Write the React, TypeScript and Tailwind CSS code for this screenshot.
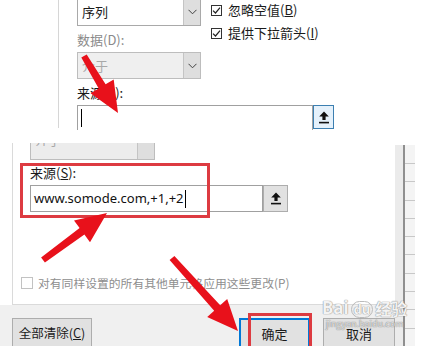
import React from "react";

type Pt = [number, number];

// outline of a thick marker-style arrow, tail -> tip
const arrowPoints = (tail: Pt, tip: Pt, shaft = 8, head = 27, headLen = 31) => {
  const dx = tip[0] - tail[0];
  const dy = tip[1] - tail[1];
  const len = Math.hypot(dx, dy);
  const ux = dx / len;
  const uy = dy / len;
  const px = -uy;
  const py = ux;
  const bx = tip[0] - ux * headLen;
  const by = tip[1] - uy * headLen;
  const t = shaft * 0.4;
  const pts: Pt[] = [
    [tail[0] + px * t, tail[1] + py * t],
    [bx + (px * shaft) / 2, by + (py * shaft) / 2],
    [bx + (px * head) / 2, by + (py * head) / 2],
    tip,
    [bx - (px * head) / 2, by - (py * head) / 2],
    [bx - (px * shaft) / 2, by - (py * shaft) / 2],
    [tail[0] - px * t, tail[1] - py * t],
  ];
  return pts.map((p) => p.map((n) => n.toFixed(1)).join(",")).join(" ");
};

const Chevron = () => (
  <svg width="9" height="6" viewBox="0 0 9 6">
    <path d="M0.5 0.8 L4.5 4.8 L8.5 0.8" fill="none" stroke="#404040" strokeWidth="1" />
  </svg>
);

const UploadIcon = () => (
  <svg width="10" height="13" viewBox="0 0 10 13">
    <path d="M5 0.5 L9.8 5.5 H6.6 V9 H3.4 V5.5 H0.2 Z" fill="#111" />
    <rect x="0" y="10.8" width="10" height="1.6" fill="#111" />
  </svg>
);

const CheckBox = ({ label, checked }: { label: React.ReactNode; checked?: boolean }) => (
  <div className="flex h-[14px] items-center">
    <div className="flex h-[11px] w-[11px] items-center justify-center border border-[#333] bg-white">
      {checked && (
        <svg width="9" height="9" viewBox="0 0 9 9">
          <path d="M1 4.6 L3.5 7 L8 1.6" fill="none" stroke="#222" strokeWidth="1.2" />
        </svg>
      )}
    </div>
    <span className="ml-[6px] whitespace-nowrap leading-[14px]">{label}</span>
  </div>
);

const Combo = ({
  value,
  disabled,
  className,
}: {
  value: string;
  disabled?: boolean;
  className: string;
}) => (
  <div
    className={`flex w-[124px] border ${
      disabled ? "border-[#bdbdbd] bg-[#efefef]" : "border-[#a9a9a9] bg-white"
    } ${className}`}
  >
    <div
      className={`flex flex-1 items-center pl-[4px] ${
        disabled ? "text-[#a8a8a8]" : "text-[#1a1a1a]"
      }`}
    >
      {value}
    </div>
    <div className="flex w-[17px] items-center justify-center border-l border-[#c4c4c4] bg-[#dedede]">
      <Chevron />
    </div>
  </div>
);

export default function App() {
  return (
    <div className="relative h-[346px] w-[440px] overflow-hidden bg-white font-['Noto_Sans_CJK_SC','Noto_Sans',sans-serif] text-[13px] text-[#1a1a1a]">
      {/* upper crop of the dialog */}
      <section className="flex h-[130px] overflow-hidden">
        <div className="w-[58px] shrink-0" />
        <div className="h-[128px] w-px shrink-0 bg-[#d6d6d6]" />
        <div className="flex flex-col pl-[18px]">
          <div className="flex">
            <div className="flex w-[124px] flex-col">
              <Combo value="序列" className="-mt-[2px] h-[28px]" />
              <div className="mt-[5px] h-[18px] leading-[18px] text-[#8a8a8a]">数据(D):</div>
              <Combo value="介于" disabled className="mt-[3px] h-[27px]" />
              <div className="mt-[5px] h-[18px] leading-[18px]">
                来源(<u>S</u>):
              </div>
            </div>
            <div className="ml-[10px] flex flex-col gap-[9px] pt-[3px]">
              <CheckBox
                checked
                label={
                  <>
                    忽略空值(<u>B</u>)
                  </>
                }
              />
              <CheckBox
                checked
                label={
                  <>
                    提供下拉箭头(<u>I</u>)
                  </>
                }
              />
            </div>
          </div>
          <div className="mt-[3px] flex">
            <div className="flex h-[26px] w-[236px] items-start border border-[#a0a0a0] bg-white pl-[3px] pt-[3px]">
              <div className="h-[18px] w-px bg-black" />
            </div>
            <div className="flex h-[24px] w-[21px] items-center justify-center border border-[#3c7fb1] bg-[#e5f1fb]">
              <UploadIcon />
            </div>
          </div>
        </div>
      </section>

      <div className="h-[13px]" />

      {/* lower crop of the dialog */}
      <section className="flex h-[203px]">
        <div className="flex w-[395px] shrink-0 flex-col">
          <div className="ml-[12px] flex h-[162px] w-[383px] flex-col border-b border-l border-[#dadada]">
            <div className="ml-[17px] flex h-[17px] w-[125px] border-x border-b border-[#bdbdbd] bg-[#ececec]">
              <div className="flex-1 overflow-hidden pl-[4px]">
                <div className="-mt-[12px] leading-[18px] text-[#a8a8a8]">介于</div>
              </div>
              <div className="w-[17px] border-l border-[#c4c4c4] bg-[#dedede]" />
            </div>
            <div className="ml-[17px] mt-[4px] h-[18px] leading-[18px]">
              来源(<u>S</u>):
            </div>
            <div className="ml-[17px] mt-[3px] flex">
              <div className="flex h-[27px] w-[233px] items-center border border-[#a0a0a0] bg-white pl-[3px] font-['Noto_Sans',sans-serif] text-[13px] text-[#111]">
                www.somode.com,+1,+2
                <span className="ml-px h-[18px] w-px bg-black" />
              </div>
              <div className="flex h-[27px] w-[25px] items-center justify-center border border-[#adadad] bg-[#e1e1e1]">
                <UploadIcon />
              </div>
            </div>
            <div className="ml-[8px] mt-[64px] flex h-[14px] items-center text-[11.8px] text-[#8e8e8e]">
              <div className="h-[12px] w-[12px] border border-[#c2c2c2] bg-white" />
              <span className="ml-[5px] whitespace-nowrap">对有同样设置的所有其他单元格应用这些更改(P)</span>
            </div>
          </div>
          <div className="flex h-[41px] bg-[#f0f0f0] pt-[13px] text-[12.5px]">
            <div className="ml-[12px] flex h-[30px] w-[80px] items-start justify-center border border-[#adadad] bg-[#e1e1e1] pt-[5px]">
              全部清除(<u>C</u>)
            </div>
            <div className="ml-[147px] flex h-[30px] w-[71px] items-start justify-center border-2 border-[#0078d7] bg-[#e1e1e1] pt-[4px] text-[13px]">
              确定
            </div>
            <div className="ml-[13px] flex h-[30px] w-[72px] items-start justify-center border border-[#adadad] bg-[#e1e1e1] pt-[5px] text-[13px]">
              取消
            </div>
          </div>
        </div>
        {/* edge of the worksheet behind the dialog */}
        <div className="mt-[2px] flex w-[20px] shrink-0">
          <div className="w-[8px] bg-[#ebebeb]" />
          <div className="w-[2px] bg-[#8f8f8f]" />
          <div className="flex w-[10px] flex-col bg-[#f4f4f4] pt-[18px]">
            {Array.from({ length: 10 }).map((_, i) => (
              <div key={i} className="h-[19px] border-t border-[#c8c8c8]" />
            ))}
          </div>
        </div>
      </section>

      {/* annotation: red boxes */}
      <div className="pointer-events-none absolute left-[20px] top-[163px] h-[55px] w-[190px] border-[3px] border-[#dd3b41]" />
      <div className="pointer-events-none absolute left-[248px] top-[313px] h-[40px] w-[64px] border-[3px] border-[#dd3b41]" />

      {/* baidu watermark */}
      <div className="pointer-events-none absolute left-[322px] top-[298px] flex flex-col items-center text-white/90 [text-shadow:0_0_1px_#888,0_0_1px_#888]">
        <div className="flex items-end font-['Noto_Sans',sans-serif] text-[17px] font-bold leading-[20px]">
          <span>Bai</span>
          <span className="mx-[2px] rounded-full border border-[#bbb] px-[2px] text-[13px] leading-[15px]">du</span>
          <span className="font-['Noto_Sans_CJK_SC',sans-serif] text-[16px]">经验</span>
        </div>
        <div className="text-[9px] leading-[12px] text-white/70">jingyan.baidu.com</div>
      </div>

      {/* annotation: red arrows */}
      <svg className="pointer-events-none absolute left-0 top-0" width="440" height="346">
        <polygon points={arrowPoints([84, 56], [118, 113])} fill="#e8111b" />
        <polygon points={arrowPoints([43, 260], [107, 213])} fill="#e8111b" />
        <polygon points={arrowPoints([172, 258], [238, 331])} fill="#e8111b" />
      </svg>
    </div>
  );
}
